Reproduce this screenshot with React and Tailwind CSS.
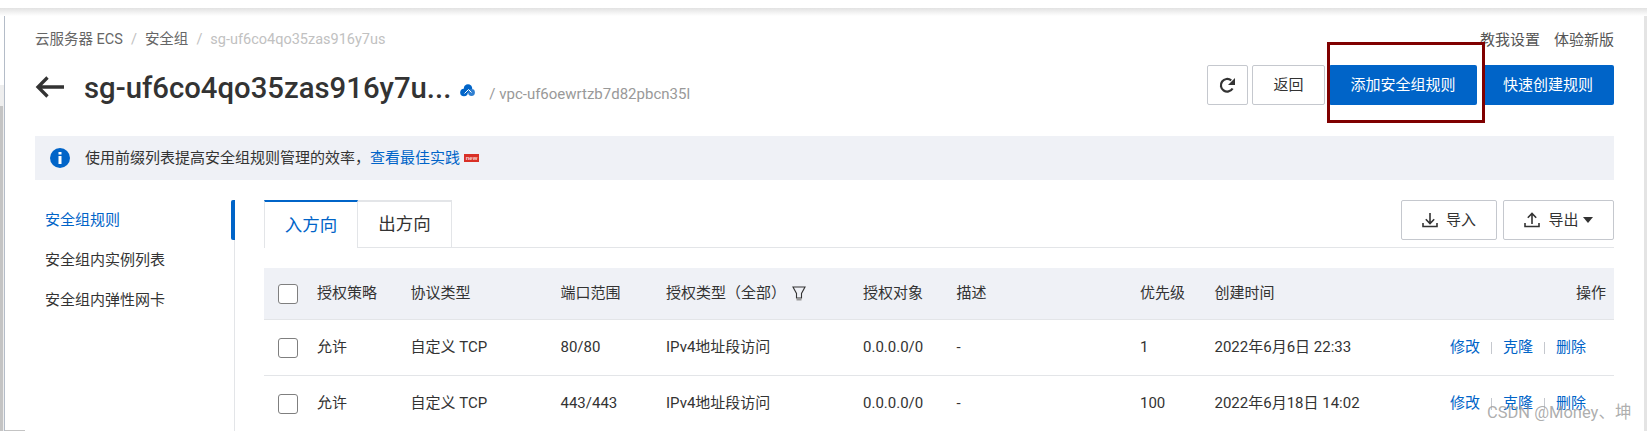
import React from 'react';

const columns = 'grid grid-cols-[53px_93.5px_150px_105.5px_197px_93.5px_183.5px_74.5px_1fr]';

const rows = [
  { port: '80/80', priority: '1', created: '2022年6月6日 22:33' },
  { port: '443/443', priority: '100', created: '2022年6月18日 14:02' },
];

function Checkbox() {
  return <span className="block w-[20px] h-[20px] ml-[14px] bg-white border border-[#7f7f7f] rounded-[3px]" />;
}

function BackArrow() {
  return (
    <svg width="29" height="26" viewBox="0 0 29 26" fill="none" stroke="#333" strokeWidth="3.3" className="shrink-0">
      <path d="M29 15H3M12.5 5.5 3 15l9.5 9.5" />
    </svg>
  );
}

function RefreshIcon() {
  return (
    <svg width="17" height="17" viewBox="0 0 17 17">
      <path d="M13.6 11.5A6.3 6.3 0 1 1 12.2 3.4" fill="none" stroke="#333" strokeWidth="2.2" />
      <path d="M16 1v7H9z" fill="#333" />
    </svg>
  );
}

function InfoIcon() {
  return (
    <svg width="20" height="20" viewBox="0 0 20 20" className="shrink-0">
      <circle cx="10" cy="10" r="10" fill="#0064c8" />
      <rect x="8.5" y="8" width="3" height="8" fill="#fff" />
      <rect x="8.5" y="4" width="3" height="2.5" fill="#fff" />
    </svg>
  );
}

function CloudIcon() {
  return (
    <svg width="15" height="13" viewBox="0 0 15 13" className="block">
      <circle cx="4" cy="8.5" r="3.8" fill="#0064c8" />
      <circle cx="8" cy="4.5" r="4.2" fill="#0064c8" />
      <circle cx="11.5" cy="8.5" r="3.4" fill="#2f7fd1" />
      <path d="M4.5 9.5 8.5 5.5l3 3" stroke="#fff" strokeWidth="1" fill="none" />
    </svg>
  );
}

function NewBadge() {
  return (
    <span className="w-[15px] h-[8px] bg-[#d93026] flex items-center justify-center ml-[4px] text-[6px] leading-none font-bold text-[#f7d9d6] font-['Liberation_Sans',sans-serif]">
      new
    </span>
  );
}

function FunnelIcon() {
  return (
    <svg width="14" height="15" viewBox="0 0 14 15" className="ml-[6px]">
      <path d="M1 1h12L9.5 7.5V12h-5V7.5z" fill="none" stroke="#333" strokeWidth="1.1" />
      <rect x="4.5" y="12" width="5" height="2.5" fill="#999" />
    </svg>
  );
}

function TransferIcon({ up }) {
  return (
    <svg width="16" height="16" viewBox="0 0 16 16" fill="none" stroke="#333" strokeWidth="1.6">
      <path d="M1 11v3.5h14V11" />
      {up ? <path d="M8 12V1.5M3.8 5.7 8 1.5l4.2 4.2" /> : <path d="M8 1v10.5M3.8 7.3 8 11.5l4.2-4.2" />}
    </svg>
  );
}

function Cell({ children, className = '' }) {
  return <div className={`flex items-center whitespace-nowrap ${className}`}>{children}</div>;
}

export default function App() {
  return (
    <div className="relative w-[1647px] h-[431px] overflow-hidden bg-white text-[15px] text-[#333] font-['Roboto','Noto_Sans_CJK_SC',sans-serif]">
      {/* screenshot edges */}
      <div className="absolute left-0 top-[85px] w-[4px] h-[346px] bg-[#eeeeee]" />
      <div className="absolute left-0 top-[106px] w-[3px] h-[325px] bg-[#c4c4c4]" />
      <div className="absolute left-[4px] top-[8px] w-[1px] h-[423px] bg-[#b4bcc8]" />
      <div className="absolute left-[5px] top-[430px] w-[20px] h-[1px] bg-[#c4c4c4]" />
      <div className="absolute right-0 top-[8px] w-[3px] h-[423px] bg-[#e4e4e4]" />
      <div className="absolute left-0 right-0 top-[8px] h-[8px] bg-gradient-to-b from-[#e2e2e2] to-white" />

      <div className="pt-[31px] pl-[35px] w-[1614px]">
        <div className="flex justify-between h-[18px] leading-[18px]">
          <div className="flex text-[14.5px]">
            <span className="text-[#666]">云服务器 ECS</span>
            <span className="text-[#c1c1c1] mx-[8px]">/</span>
            <span className="text-[#666]">安全组</span>
            <span className="text-[#c1c1c1] mx-[8px]">/</span>
            <span className="text-[#c1c1c1]">sg-uf6co4qo35zas916y7us</span>
          </div>
          <div className="flex gap-[14px] text-[#555]">
            <span>教我设置</span>
            <span>体验新版</span>
          </div>
        </div>

        <div className="flex items-center justify-between h-[40px] mt-[16px]">
          <div className="flex items-center">
            <BackArrow />
            <span className="ml-[20px] pt-[6px] text-[29.3px] leading-[40px] font-medium text-[#333]">sg-uf6co4qo35zas916y7u...</span>
            <span className="ml-[9px] pt-[11px]"><CloudIcon /></span>
            <span className="ml-[14px] pt-[19px] text-[#999]">/ vpc-uf6oewrtzb7d82pbcn35l</span>
          </div>
          <div className="flex">
            <button className="w-[41px] h-[40px] flex items-center justify-center border border-[#c5c8ce] rounded-[2px] bg-white">
              <RefreshIcon />
            </button>
            <button className="w-[73px] h-[40px] ml-[4px] border border-[#c5c8ce] rounded-[2px] bg-white">返回</button>
            <button className="w-[148px] h-[40px] ml-[4px] bg-[#0064c8] text-white rounded-[2px]">添加安全组规则</button>
            <button className="w-[132px] h-[40px] ml-[5px] bg-[#0064c8] text-white rounded-[2px]">快速创建规则</button>
          </div>
        </div>

        <div className="flex items-center h-[44px] mt-[31px] pl-[15px] bg-[#eff1f6]">
          <InfoIcon />
          <span className="ml-[15px]">使用前缀列表提高安全组规则管理的效率，</span>
          <span className="text-[#0064c8]">查看最佳实践</span>
          <NewBadge />
        </div>

        <div className="flex mt-[20px]">
          <nav className="w-[200px] border-r border-[#e3e5e8] h-[231px] relative">
            <div className="absolute right-[-1px] top-0 w-[4px] h-[40px] bg-[#0064c8] rounded-l-[2px]" />
            <div className="h-[40px] pl-[10px] flex items-center text-[#0064c8]">安全组规则</div>
            <div className="h-[40px] pl-[10px] flex items-center">安全组内实例列表</div>
            <div className="h-[40px] pl-[10px] flex items-center">安全组内弹性网卡</div>
          </nav>

          <main className="flex-1 ml-[29px]">
            <div className="flex justify-between h-[48px] border-b border-[#e3e5e8]">
              <div className="flex text-[17.5px] h-[47px]">
                <div className="w-[94px] flex items-center justify-center border-l border-r border-[#e3e5e8] border-t-2 border-t-[#0064c8] text-[#0064c8] bg-white h-[48px]">入方向</div>
                <div className="w-[94px] flex items-center justify-center border-r border-t-2 border-[#e3e5e8]">出方向</div>
              </div>
              <div className="flex gap-[6px] h-[40px]">
                <button className="w-[96px] flex items-center justify-center gap-[8px] border border-[#c5c8ce] rounded-[2px]">
                  <TransferIcon />
                  导入
                </button>
                <button className="w-[111px] flex items-center justify-center gap-[8px] border border-[#c5c8ce] rounded-[2px]">
                  <TransferIcon up />
                  <span className="flex items-center gap-[4px]">
                    导出
                    <span className="w-0 h-0 border-x-[5px] border-x-transparent border-t-[6px] border-t-[#333]" />
                  </span>
                </button>
              </div>
            </div>

            <div className={`${columns} h-[52px] mt-[20px] bg-[#eff1f6] border-b border-[#e3e5e8]`}>
              <Cell><Checkbox /></Cell>
              <Cell>授权策略</Cell>
              <Cell>协议类型</Cell>
              <Cell>端口范围</Cell>
              <Cell>授权类型（全部）<FunnelIcon /></Cell>
              <Cell>授权对象</Cell>
              <Cell>描述</Cell>
              <Cell>优先级</Cell>
              <Cell className="justify-between pr-[8px]"><span>创建时间</span><span>操作</span></Cell>
            </div>

            {rows.map((row) => (
              <div key={row.port} className={`${columns} h-[56px] border-b border-[#e3e5e8]`}>
                <Cell><Checkbox /></Cell>
                <Cell>允许</Cell>
                <Cell>自定义 TCP</Cell>
                <Cell>{row.port}</Cell>
                <Cell>IPv4地址段访问</Cell>
                <Cell>0.0.0.0/0</Cell>
                <Cell>-</Cell>
                <Cell>{row.priority}</Cell>
                <Cell className="justify-between pr-[28px]">
                  {row.created}
                  <span className="flex items-center text-[#0064c8]">
                    修改
                    <span className="w-px h-[12px] bg-[#c5c8ce] mx-[11px]" />
                    克隆
                    <span className="w-px h-[12px] bg-[#c5c8ce] mx-[11px]" />
                    删除
                  </span>
                </Cell>
              </div>
            ))}
          </main>
        </div>
      </div>

      {/* annotation + watermark laid over the page */}
      <div className="absolute left-[1327px] top-[42px] w-[158px] h-[81px] border-[3px] border-[#7f0000]" />
      <div className="absolute left-[1487px] top-[403px] text-[16.5px] leading-[20px] text-[#999]/80 whitespace-nowrap">CSDN @Money、坤</div>
    </div>
  );
}
